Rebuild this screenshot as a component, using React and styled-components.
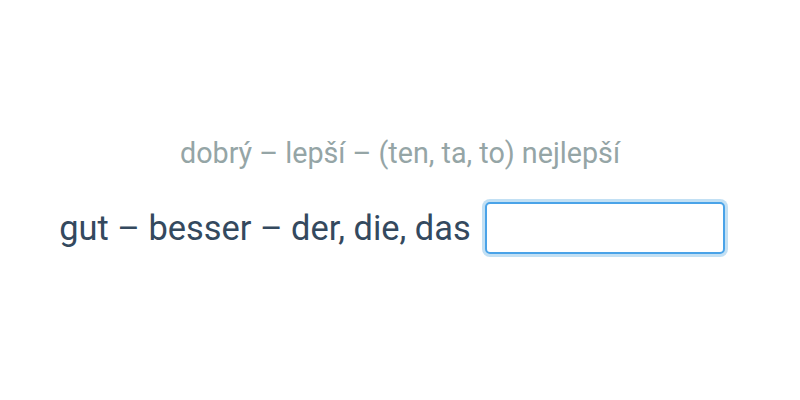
import React from 'react';
import styled, { createGlobalStyle } from 'styled-components';

const GlobalStyle = createGlobalStyle`
  html, body {
    margin: 0;
    padding: 0;
    background: #fff;
    font-family: Roboto, "Liberation Sans", sans-serif;
  }
`;

const Page = styled.div`
  width: 800px;
  height: 400px;
  box-sizing: border-box;
  padding-bottom: 10px;
  display: flex;
  flex-direction: column;
  align-items: center;
  justify-content: center;
  gap: 32px;
`;

const Hint = styled.div`
  color: #95a5a6;
  font-size: 28.7px;
  line-height: 34px;
`;

const Row = styled.div`
  display: flex;
  align-items: center;
  gap: 14px;
  padding-right: 16px;
  color: #34495e;
  font-size: 34.4px;
`;

const Answer = styled.input`
  width: 240px;
  height: 52px;
  box-sizing: border-box;
  border: 2px solid #4aa3e8;
  border-radius: 5px;
  box-shadow: 0 0 0 3px rgba(52, 152, 219, 0.3);
  outline: none;
  font: inherit;
  padding: 0 10px;
`;

export default function App() {
  return (
    <>
      <GlobalStyle />
      <Page>
        <Hint>dobrý – lepší – (ten, ta, to) nejlepší</Hint>
        <Row>
          <span>gut – besser – der, die, das</span>
          <Answer type="text" />
        </Row>
      </Page>
    </>
  );
}
